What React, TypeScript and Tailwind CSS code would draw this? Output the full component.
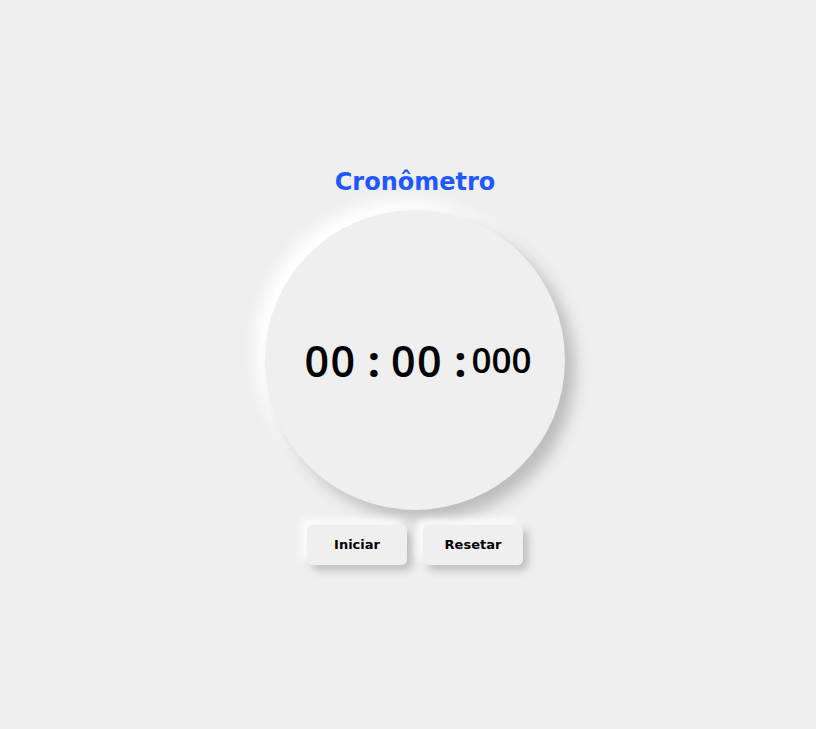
export default function App() {
  return (
    <div className="min-h-screen bg-[#efefef] flex flex-col items-center justify-center pl-[14px] pt-[4px] font-['DejaVu_Sans',Verdana,sans-serif]">
      <h1 className="text-[24px] leading-[28px] font-bold text-[#2058ff] mb-[14px]">
        Cronômetro
      </h1>

      {/* Relógio */}
      <div className="w-[300px] h-[300px] rounded-full bg-[#efefef] flex items-center justify-center shadow-[10px_10px_15px_#bcbcbc,-10px_-10px_15px_#ffffff]">
        <div className="flex items-start text-black pl-[6px] pt-[2px] font-['Open_Sans',sans-serif] font-semibold">
          <span className="text-[43px] leading-[48px] tracking-[1.5px]">00</span>
          <span className="text-[43px] leading-[48px] font-bold ml-[11px]">:</span>
          <span className="text-[43px] leading-[48px] tracking-[1.5px] ml-[11px]">00</span>
          <span className="text-[43px] leading-[48px] font-bold ml-[11px]">:</span>
          <span className="text-[35px] leading-[40px] ml-[5px] mt-[3px]">000</span>
        </div>
      </div>

      <div className="flex gap-4 mt-[15px]">
        <button className="w-[100px] h-[40px] rounded-[5px] bg-[#efefef] text-[13px] font-bold text-black shadow-[5px_5px_8px_#bcbcbc,-5px_-5px_8px_#ffffff]">
          Iniciar
        </button>
        <button className="w-[100px] h-[40px] rounded-[5px] bg-[#efefef] text-[13px] font-bold text-black shadow-[5px_5px_8px_#bcbcbc,-5px_-5px_8px_#ffffff]">
          Resetar
        </button>
      </div>
    </div>
  );
}
